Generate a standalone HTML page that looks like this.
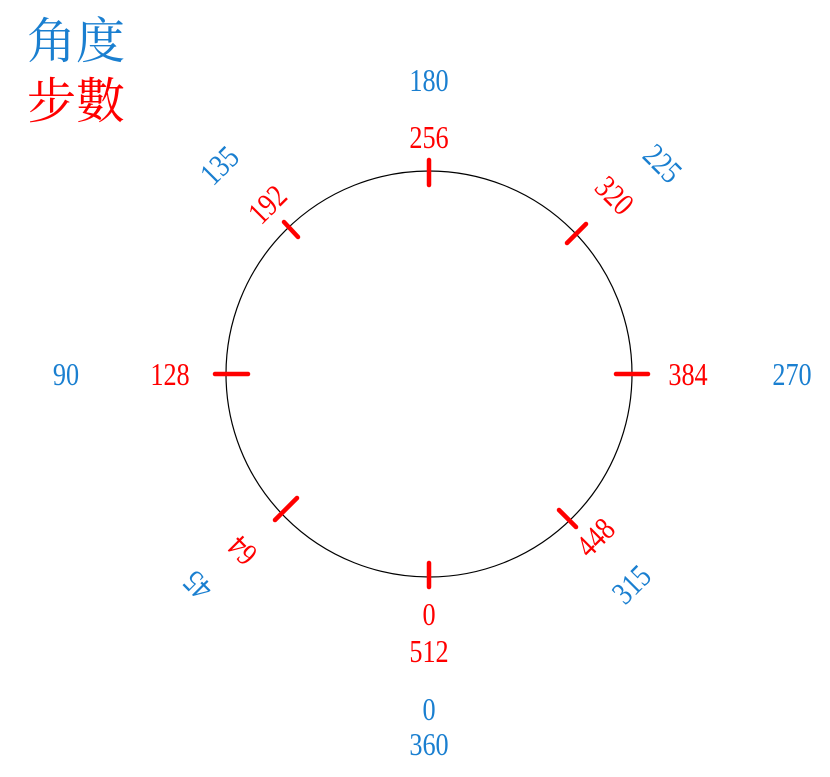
<!DOCTYPE html>
<html><head><meta charset="utf-8"><style>
html,body{margin:0;padding:0;background:#fff;}
svg{display:block}
.n{font-family:"Liberation Serif",serif;font-size:32px;}
.b{fill:#1a7fd0}.r{fill:#ff0000}
.cj{font-family:"Liberation Serif","Noto Serif CJK SC",serif;font-size:49px;}
</style></head><body>
<svg width="830" height="777" viewBox="0 0 830 777" xmlns="http://www.w3.org/2000/svg">
<text class="cj" x="27" y="58" fill="#1a7fd0">角度</text>
<text class="cj" x="27" y="118" fill="#ff0000">步數</text>
<circle cx="429" cy="374" r="203" fill="none" stroke="#000" stroke-width="1.2"/>
<g stroke="#ff0000" stroke-width="4.5" stroke-linecap="round">
<line x1="429" y1="160" x2="429" y2="185"/>
<line x1="429" y1="563" x2="429" y2="587"/>
<line x1="215" y1="374" x2="248" y2="374"/>
<line x1="616" y1="374" x2="648" y2="374"/>
<line x1="284" y1="222" x2="298" y2="237"/>
<line x1="567" y1="243" x2="586" y2="224"/>
<line x1="275" y1="520" x2="297" y2="498"/>
<line x1="559" y1="510" x2="576" y2="527"/>
</g>
<g class="n" text-anchor="middle" dominant-baseline="central">
<text class="b" transform="translate(429,81) scale(0.82,1)">180</text>
<text class="b" transform="translate(220,166) rotate(-45) scale(0.82,1)">135</text>
<text class="b" transform="translate(662,164) rotate(45) scale(0.82,1)">225</text>
<text class="b" transform="translate(66,375) scale(0.82,1)">90</text>
<text class="b" transform="translate(792,375) scale(0.82,1)">270</text>
<text class="b" transform="translate(198,585) rotate(225) scale(0.82,1)">45</text>
<text class="b" transform="translate(632,585) rotate(-45) scale(0.82,1)">315</text>
<text class="b" transform="translate(429,710) scale(0.82,1)">0</text>
<text class="b" transform="translate(429,745) scale(0.82,1)">360</text>
<text class="r" transform="translate(429,138) scale(0.82,1)">256</text>
<text class="r" transform="translate(268,205) rotate(-45) scale(0.82,1)">192</text>
<text class="r" transform="translate(614,196) rotate(45) scale(0.82,1)">320</text>
<text class="r" transform="translate(170,375) scale(0.82,1)">128</text>
<text class="r" transform="translate(688,375) scale(0.82,1)">384</text>
<text class="r" transform="translate(243,550) rotate(225) scale(0.82,1)">64</text>
<text class="r" transform="translate(596,538) rotate(-45) scale(0.82,1)">448</text>
<text class="r" transform="translate(429,615) scale(0.82,1)">0</text>
<text class="r" transform="translate(429,652) scale(0.82,1)">512</text>
</g>
</svg>
</body></html>
